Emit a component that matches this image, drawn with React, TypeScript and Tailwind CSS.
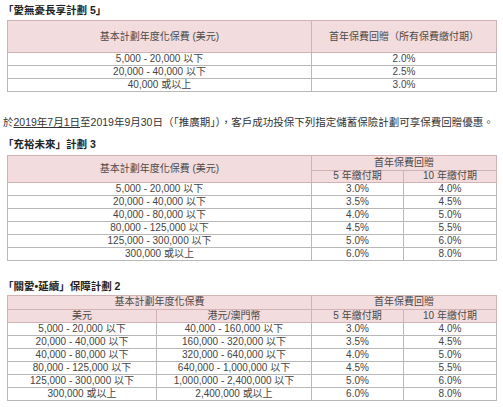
const font = { fontFamily: '"Liberation Sans", "Noto Sans CJK TC", sans-serif' }

const plan3 = [
  ['5,000 - 20,000 以下', '3.0%', '4.0%'],
  ['20,000 - 40,000 以下', '3.5%', '4.5%'],
  ['40,000 - 80,000 以下', '4.0%', '5.0%'],
  ['80,000 - 125,000 以下', '4.5%', '5.5%'],
  ['125,000 - 300,000 以下', '5.0%', '6.0%'],
  ['300,000 或以上', '6.0%', '8.0%'],
]

const plan2 = [
  ['5,000 - 20,000 以下', '40,000 - 160,000 以下', '3.0%', '4.0%'],
  ['20,000 - 40,000 以下', '160,000 - 320,000 以下', '3.5%', '4.5%'],
  ['40,000 - 80,000 以下', '320,000 - 640,000 以下', '4.0%', '5.0%'],
  ['80,000 - 125,000 以下', '640,000 - 1,000,000 以下', '4.5%', '5.5%'],
  ['125,000 - 300,000 以下', '1,000,000 - 2,400,000 以下', '5.0%', '6.0%'],
  ['300,000 或以上', '2,400,000 或以上', '6.0%', '8.0%'],
]

const th = 'border border-[#d2b2b4] bg-[#f3dcdd] p-0 font-normal text-center text-[#4a4a4a] leading-none'
const td = 'border border-[#b8b8b8] p-0 text-center text-[#444] leading-none h-[13px]'

export default function App() {
  return (
    <div className="w-[503px] h-[407px] bg-white text-[10px] overflow-hidden" style={font}>
      <div className="pl-[3px] pt-[5px] h-[20px] text-[10.5px] font-bold text-[#222] leading-none">「愛無憂長享計劃 5」</div>

      <table className="ml-[7px] w-[489px] table-fixed border-collapse">
        <colgroup>
          <col className="w-[304px]" />
          <col className="w-[185px]" />
        </colgroup>
        <thead>
          <tr>
            <th className={`${th} h-[32px]`}>基本計劃年度化保費 (美元)</th>
            <th className={`${th} h-[32px]`}>首年保費回贈（所有保費繳付期）</th>
          </tr>
        </thead>
        <tbody>
          <tr><td className={td}>5,000 - 20,000 以下</td><td className={td}>2.0%</td></tr>
          <tr><td className={td}>20,000 - 40,000 以下</td><td className={td}>2.5%</td></tr>
          <tr><td className={td}>40,000 或以上</td><td className={td}>3.0%</td></tr>
        </tbody>
      </table>

      <p className="pl-[3px] mt-[25px] text-[10.5px] text-[#333] leading-none">
        於<span className="underline">2019年7月1日</span>至2019年9月30日（「推廣期」），客戶成功投保下列指定儲蓄保險計劃可享保費回贈優惠。
      </p>

      <div className="pl-[3px] mt-[11px] h-[16px] text-[10.5px] font-bold text-[#222] leading-none">「充裕未來」計劃 3</div>

      <table className="ml-[7px] w-[489px] table-fixed border-collapse">
        <colgroup>
          <col className="w-[304px]" />
          <col className="w-[92px]" />
          <col className="w-[93px]" />
        </colgroup>
        <thead>
          <tr>
            <th rowSpan={2} className={th}>基本計劃年度化保費 (美元)</th>
            <th colSpan={2} className={`${th} h-[15px]`}>首年保費回贈</th>
          </tr>
          <tr>
            <th className={`${th} h-[12px]`}>5 年繳付期</th>
            <th className={`${th} h-[12px]`}>10 年繳付期</th>
          </tr>
        </thead>
        <tbody>
          {plan3.map(r => (
            <tr key={r[0]}>
              {r.map((c, i) => <td key={i} className={td}>{c}</td>)}
            </tr>
          ))}
        </tbody>
      </table>

      <div className="pl-[3px] mt-[20px] h-[14px] text-[10.5px] font-bold text-[#222] leading-none">「關愛•延續」保障計劃 2</div>

      <table className="ml-[7px] w-[489px] table-fixed border-collapse">
        <colgroup>
          <col className="w-[149px]" />
          <col className="w-[155px]" />
          <col className="w-[92px]" />
          <col className="w-[93px]" />
        </colgroup>
        <thead>
          <tr>
            <th colSpan={2} className={`${th} h-[14px]`}>基本計劃年度化保費</th>
            <th colSpan={2} className={`${th} h-[14px]`}>首年保費回贈</th>
          </tr>
          <tr>
            <th className={`${th} h-[13px]`}>美元</th>
            <th className={`${th} h-[13px]`}>港元/澳門幣</th>
            <th className={`${th} h-[13px]`}>5 年繳付期</th>
            <th className={`${th} h-[13px]`}>10 年繳付期</th>
          </tr>
        </thead>
        <tbody>
          {plan2.map(r => (
            <tr key={r[0]}>
              {r.map((c, i) => <td key={i} className={td}>{c}</td>)}
            </tr>
          ))}
        </tbody>
      </table>
    </div>
  )
}
